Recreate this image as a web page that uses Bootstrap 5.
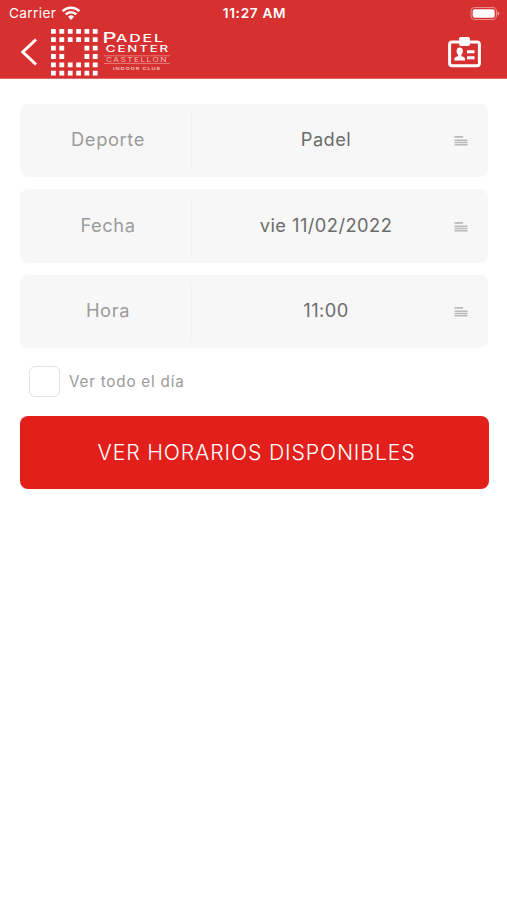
<!DOCTYPE html>
<html lang="es">
<head>
<meta charset="utf-8">
<meta name="viewport" content="width=device-width, initial-scale=1">
<title>Padel Center Castellón</title>
<link href="https://cdn.jsdelivr.net/npm/bootstrap@5.3.0/dist/css/bootstrap.min.css" rel="stylesheet">
<style>
body{font-family:Inter,"Open Sans",sans-serif;background:#fff;min-height:900px}
.app-head{background:#d73030;height:79px;border-bottom:1px solid #e06a68}
.status{height:27px;padding:0 7px 0 9px;font-size:13.6px;line-height:27px}
.status>div{flex:1 1 0}
.carrier{letter-spacing:.4px;margin-right:1px}
.status .clock{font-weight:600;font-size:13.6px;letter-spacing:.7px}
.bar{height:51px;padding:0 26px 0 20px}
.back{margin-bottom:2px}
.fields{padding:25px 19px 0 20px;gap:12.3px}
.field{height:73.2px;background:#f7f7f7;border-radius:8px;font-size:18.3px;color:#6c6c6c}
.field-name{width:172px;height:56px;border-right:1px solid #f0f0f0;color:#9b9b9b;padding-left:5px;padding-bottom:1px;letter-spacing:.6px}
.field-value{padding-left:6px;padding-bottom:1px;letter-spacing:.45px}
.field svg{margin-right:20px;margin-top:1px}
.all-day{padding:18px 29px 0;gap:9px;font-size:15.2px;color:#9b9b9b;letter-spacing:.8px}
.all-day span{padding-top:1px}
.all-day .form-check-input{width:31px;height:31px;border-radius:6px;border:1.5px solid #e2e2e2;margin:0}
.go{margin:18.5px 18.5px 0 19.5px;height:73.5px;background:#e31f1c;border-radius:8px;font-size:21.2px;font-weight:300;color:#fff;letter-spacing:.87px}
.go span{padding-left:5px}
</style>
<script src="https://cdn.jsdelivr.net/npm/bootstrap@5.3.0/dist/js/bootstrap.bundle.min.js"></script>
</head>
<body>
<header class="app-head text-white">
  <div class="status d-flex align-items-center">
    <div class="d-flex align-items-center gap-1"><span class="carrier">Carrier</span>
      <svg width="20" height="15" viewBox="0 0 20 15" fill="none" stroke="#fff" stroke-width="2.5"><path d="M1.6 5.2a12 12 0 0 1 16.8 0M4.7 8.3a7.6 7.6 0 0 1 10.6 0"/><path d="M10 13.9 7 10.8a4.3 4.3 0 0 1 6 0z" fill="#fff" stroke="none"/></svg>
    </div>
    <span class="clock">11:27 AM</span>
    <div class="d-flex justify-content-end">
      <svg width="30" height="14" viewBox="0 0 30 14"><rect x="1" y=".5" width="25.5" height="12" rx="3.5" fill="none" stroke="#e88f8d"/><rect x="2.7" y="2.2" width="22" height="8.6" rx="2" fill="#fff"/><path d="M27.7 4.500v4q1.5-.7 1.5-2t-1.500-2z" fill="#f0a8a6"/></svg>
    </div>
  </div>
  <div class="bar d-flex align-items-center">
    <svg class="back" width="18" height="30" viewBox="0 0 18 30" fill="none" stroke="#fff" stroke-width="3"><path d="M16 2.500 2.800 15 16 27.500"/></svg>
    <svg class="ms-2 ps-1" width="134" height="51" viewBox="50 27 130 51" preserveAspectRatio="xMinYMin" fill="#fff" font-family="Inter, sans-serif">
      <defs>
        <g id="rowFull"><path d="M51 0h4.800v4.800H51zM59.400 0h4.800v4.800h-4.800zM67.800 0h4.800v4.800h-4.800zM76.200 0h4.800v4.800h-4.800zM84.500 0h4.800v4.800h-4.800zM92.800 0h4.800v4.800h-4.800z"/></g>
        <g id="rowSides"><path d="M51 0h4.800v4.800H51zM59.400 0h4.800v4.800h-4.800zM84.500 0h4.800v4.800h-4.800zM92.800 0h4.800v4.800h-4.800z"/></g>
      </defs>
      <use href="#rowFull" y="29"/><use href="#rowFull" y="37.300"/><use href="#rowSides" y="45.700"/><use href="#rowSides" y="54.100"/><use href="#rowFull" y="62.400"/><use href="#rowFull" y="70.700"/>
      <g font-weight="500">
        <text x="102.500" y="43" font-size="14.500" textLength="14" lengthAdjust="spacingAndGlyphs">P</text>
        <g letter-spacing="1.200">
        <text x="116" y="42.300" font-size="9.800" textLength="49" lengthAdjust="spacingAndGlyphs">ADEL</text>
        <text x="105.500" y="52.200" font-size="9" textLength="12" lengthAdjust="spacingAndGlyphs">C</text>
        <text x="117.500" y="51.900" font-size="8.700" textLength="52.500" lengthAdjust="spacingAndGlyphs">ENTER</text>
        </g>
      </g>
      <path d="M104 55.800h66M104 63.500h66" stroke="#eb9a98" stroke-width=".7"/>
      <text x="106" y="61.900" font-size="5.800" letter-spacing="1" textLength="62" lengthAdjust="spacingAndGlyphs" fill="#f3b9b7">CASTELLON</text>
      <text x="113" y="70.300" font-size="3.800" font-weight="600" letter-spacing=".7" textLength="48" lengthAdjust="spacingAndGlyphs" fill="#f6c6c4">INDOOR CLUB</text>
    </svg>
    <svg class="ms-auto" width="33" height="31" viewBox="0 0 33 31" fill="#fff"><rect x="1.600" y="5.100" width="29.800" height="23.600" rx="2.500" fill="none" stroke="#fff" stroke-width="3"/><rect x="11" y="0" width="11" height="9" rx="2"/><ellipse cx="11.700" cy="14.300" rx="3.100" ry="3.700"/><path d="M6.300 23.500v-1.500q0-2 3.700-2.800V17h3.400v2.200q3.700.8 3.700 2.800v1.500zM19 13.300h7.500v3H19zM19 19.200h7.500v3H19z"/></svg>
  </div>
</header>
<main>
  <div class="fields d-flex flex-column">
    <div class="field d-flex align-items-center">
      <div class="field-name d-flex align-items-center justify-content-center">Deporte</div>
      <div class="field-value flex-grow-1 text-center">Padel</div>
      <svg width="14" height="10" viewBox="0 0 14 10" fill="#b9b9b9"><path d="M.5 0H9v1.800H.5zM.5 3.400h13v1.800H.5zM.5 6h13v1.200H.5zM.5 8h13v1.500H.5z"/></svg>
    </div>
    <div class="field d-flex align-items-center">
      <div class="field-name d-flex align-items-center justify-content-center">Fecha</div>
      <div class="field-value flex-grow-1 text-center">vie 11/02/2022</div>
      <svg width="14" height="10" viewBox="0 0 14 10" fill="#b9b9b9"><path d="M.5 0H9v1.800H.5zM.5 3.400h13v1.800H.5zM.5 6h13v1.200H.5zM.5 8h13v1.500H.5z"/></svg>
    </div>
    <div class="field d-flex align-items-center">
      <div class="field-name d-flex align-items-center justify-content-center">Hora</div>
      <div class="field-value flex-grow-1 text-center">11:00</div>
      <svg width="14" height="10" viewBox="0 0 14 10" fill="#b9b9b9"><path d="M.5 0H9v1.800H.5zM.5 3.400h13v1.800H.5zM.5 6h13v1.200H.5zM.5 8h13v1.500H.5z"/></svg>
    </div>
  </div>
  <label class="all-day d-flex align-items-center"><input class="form-check-input" type="checkbox"><span>Ver todo el día</span></label>
  <div class="d-grid"><button class="go btn border-0 p-0" type="button"><span>VER HORARIOS DISPONIBLES</span></button></div>
</main>
</body>
</html>
